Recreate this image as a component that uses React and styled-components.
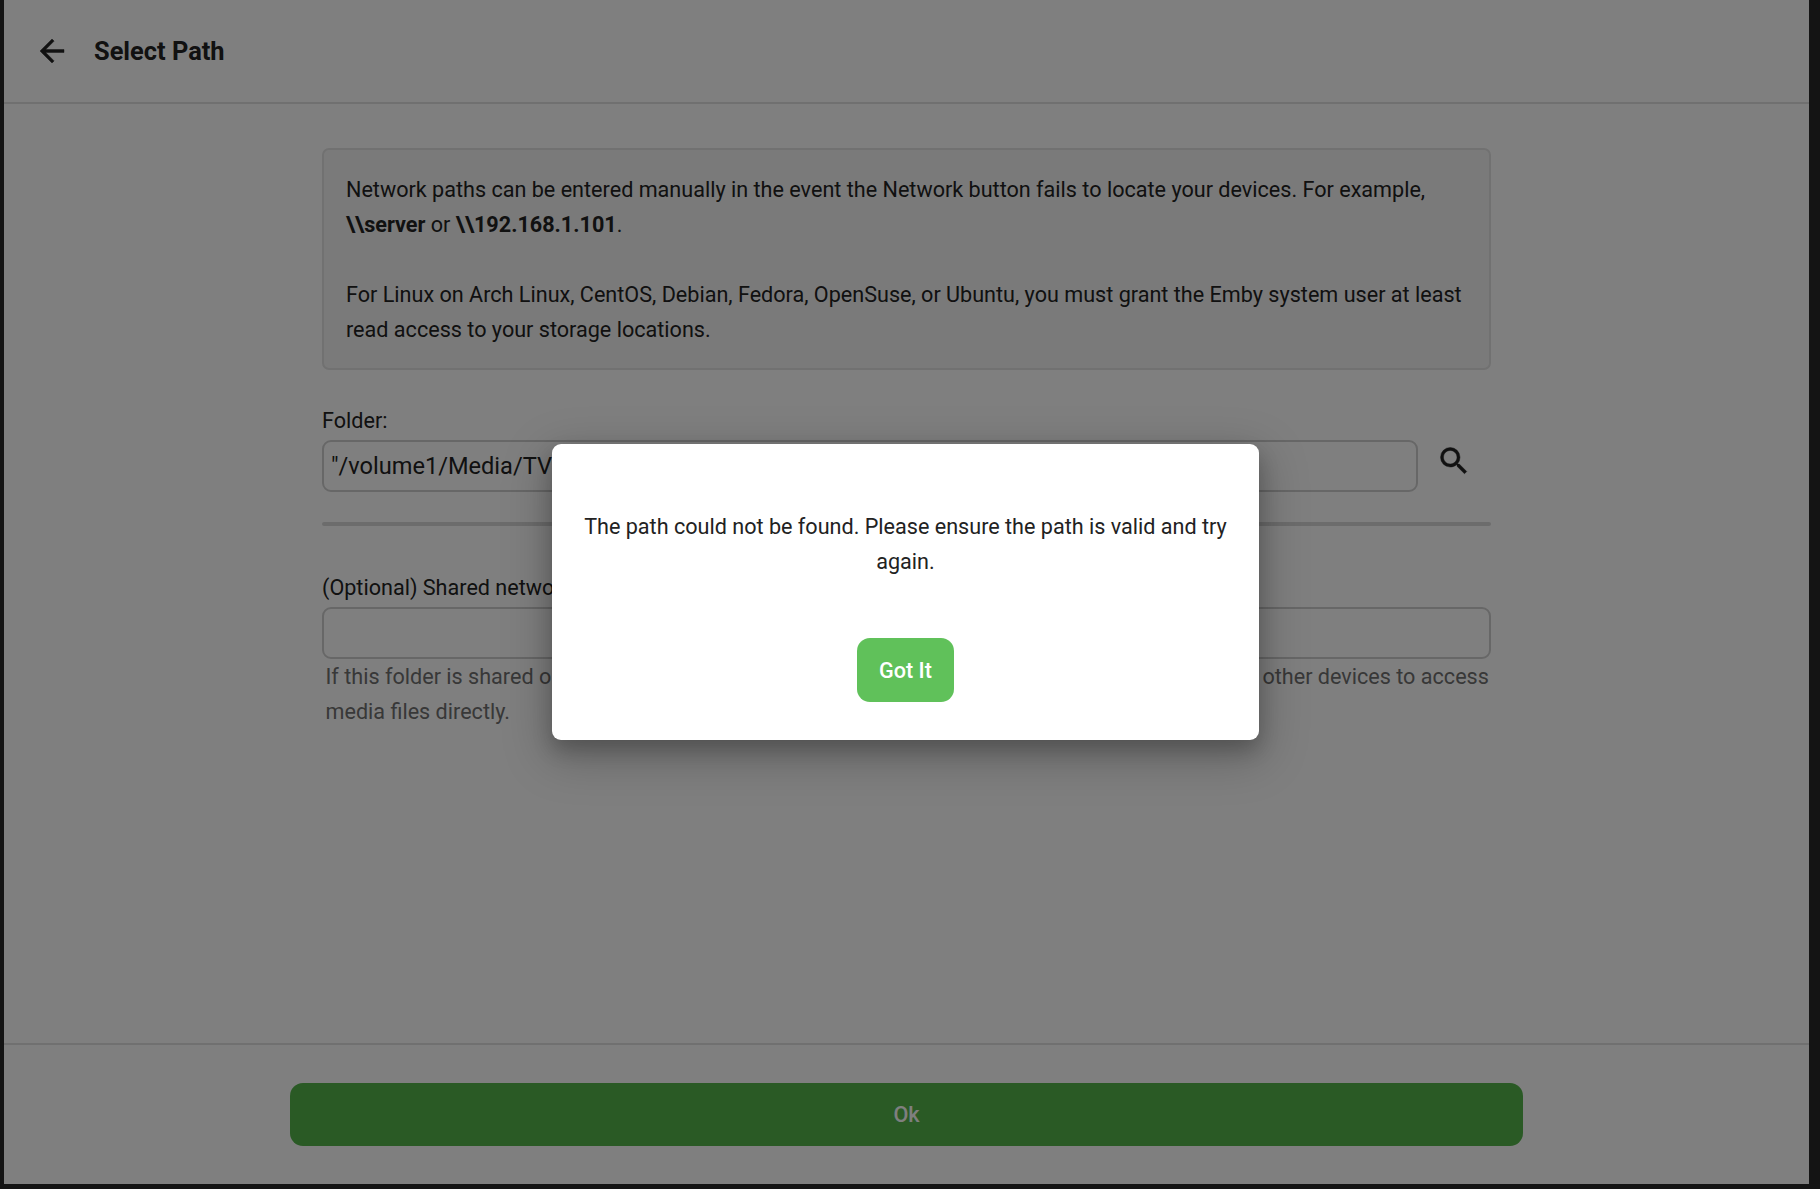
import styled, { createGlobalStyle } from "styled-components";
import { MdArrowBack, MdSearch } from "react-icons/md";

const GlobalStyle = createGlobalStyle`
  html, body {
    margin: 0;
    padding: 0;
    background: #141414;
    font-family: Roboto, "Liberation Sans", sans-serif;
  }
  * {
    box-sizing: border-box;
  }
`;

export default function App() {
  return (
    <Frame>
      <GlobalStyle />
      <Page>
        <Header>
          <BackButton>
            <MdArrowBack size={36} />
          </BackButton>
          <Title>Select Path</Title>
        </Header>

        <Content>
          <InfoBox>
            Network paths can be entered manually in the event the Network button fails to locate your devices. For
            example, <b>\\server</b> or <b>\\192.168.1.101</b>.
            <br />
            <br />
            For Linux on Arch Linux, CentOS, Debian, Fedora, OpenSuse, or Ubuntu, you must grant the Emby system user
            at least read access to your storage locations.
          </InfoBox>

          <FolderLabel>Folder:</FolderLabel>
          <FolderRow>
            <TextField defaultValue={'"/volume1/Media/TV Shows"'} />
            <SearchButton>
              <MdSearch size={36} />
            </SearchButton>
          </FolderRow>
          <Divider />

          <ShareLabel>(Optional) Shared network folder:</ShareLabel>
          <TextField />
          <HelpText>
            If this folder is shared on your network, supplying the network share path can allow Emby apps on other
            devices to access media files directly.
          </HelpText>
        </Content>

        <Footer>
          <OkButton>Ok</OkButton>
        </Footer>

        <Overlay>
          <Dialog>
            <DialogText>The path could not be found. Please ensure the path is valid and try again.</DialogText>
            <GotItButton>Got It</GotItButton>
          </Dialog>
        </Overlay>
      </Page>
    </Frame>
  );
}

const Frame = styled.div`
  width: 1820px;
  height: 1189px;
  padding: 0 11px 5px 4px;
  background: #141414;
  overflow: hidden;
`;

const Page = styled.div`
  position: relative;
  width: 100%;
  height: 100%;
  display: flex;
  flex-direction: column;
  background: #fff;
  color: #222;
  font-size: 21.6px;
  line-height: 35px;
`;

const Header = styled.header`
  height: 104px;
  flex-shrink: 0;
  display: flex;
  align-items: center;
  padding-left: 30px;
  border-bottom: 2px solid #e0e0e0;
`;

const BackButton = styled.button`
  width: 36px;
  height: 36px;
  padding: 0;
  border: none;
  background: transparent;
  color: #222;
  display: flex;
  path:not([fill="none"]) {
    stroke: currentColor;
    stroke-width: 0.3;
  }
`;

const Title = styled.h1`
  margin: 0 0 0 24px;
  font-size: 25.4px;
  font-weight: 700;
  color: #222;
`;

const Content = styled.main`
  flex: 1;
  width: 1169px;
  margin: 0 auto;
  padding-top: 44px;
`;

const InfoBox = styled.div`
  height: 222px;
  padding: 22px 22px;
  border: 2px solid #e2e2e2;
  border-radius: 7px;
  background: #f5f5f5;
  b {
    font-weight: 700;
  }
`;

const FolderLabel = styled.label`
  display: block;
  margin: 33px 0 2px;
`;

const ShareLabel = styled(FolderLabel)`
  margin: 44px 0 2px;
`;

const FolderRow = styled.div`
  display: flex;
`;

const TextField = styled.input`
  display: block;
  width: 100%;
  height: 52px;
  padding: 0 7px;
  border: 2.5px solid #cfcfcf;
  border-radius: 9px;
  background: transparent;
  color: #222;
  font-family: inherit;
  font-size: 23.6px;
  outline: none;
`;

const SearchButton = styled.button`
  width: 73px;
  height: 41px;
  flex-shrink: 0;
  padding: 0 2px 0 0;
  border: none;
  background: transparent;
  color: #222;
  display: flex;
  align-items: center;
  justify-content: center;
  path:not([fill="none"]) {
    stroke: currentColor;
    stroke-width: 0.3;
  }
`;

const Divider = styled.hr`
  height: 4px;
  margin: 30px 0 0;
  border: none;
  border-radius: 2px;
  background: #d8d8d8;
`;

const HelpText = styled.p`
  margin: 0;
  padding-left: 3.5px;
  color: #707070;
`;

const Footer = styled.footer`
  height: 141px;
  flex-shrink: 0;
  display: flex;
  justify-content: center;
  padding-top: 38px;
  border-top: 2px solid #e0e0e0;
`;

const OkButton = styled.button`
  width: 1233px;
  height: 63px;
  border: none;
  border-radius: 13px;
  background: #54b44b;
  color: #fff;
  font-family: inherit;
  font-size: 21.6px;
  font-weight: 500;
`;

const Overlay = styled.div`
  position: absolute;
  inset: 0;
  display: flex;
  align-items: center;
  justify-content: center;
  padding-right: 2px;
  background: rgba(0, 0, 0, 0.5);
`;

const Dialog = styled.div`
  width: 707px;
  height: 296px;
  display: flex;
  flex-direction: column;
  align-items: center;
  padding: 65px 28px 0;
  border-radius: 9px;
  background: #fff;
  box-shadow: 0 10px 20px rgba(0, 0, 0, 0.2), 0 14px 46px 6px rgba(0, 0, 0, 0.22);
`;

const DialogText = styled.p`
  margin: 0;
  color: #222;
  text-align: center;
`;

const GotItButton = styled.button`
  width: 97px;
  height: 64px;
  margin-top: 59px;
  border: none;
  border-radius: 13px;
  background: #60c15a;
  color: #fff;
  font-family: inherit;
  font-size: 21.6px;
  font-weight: 500;
`;
